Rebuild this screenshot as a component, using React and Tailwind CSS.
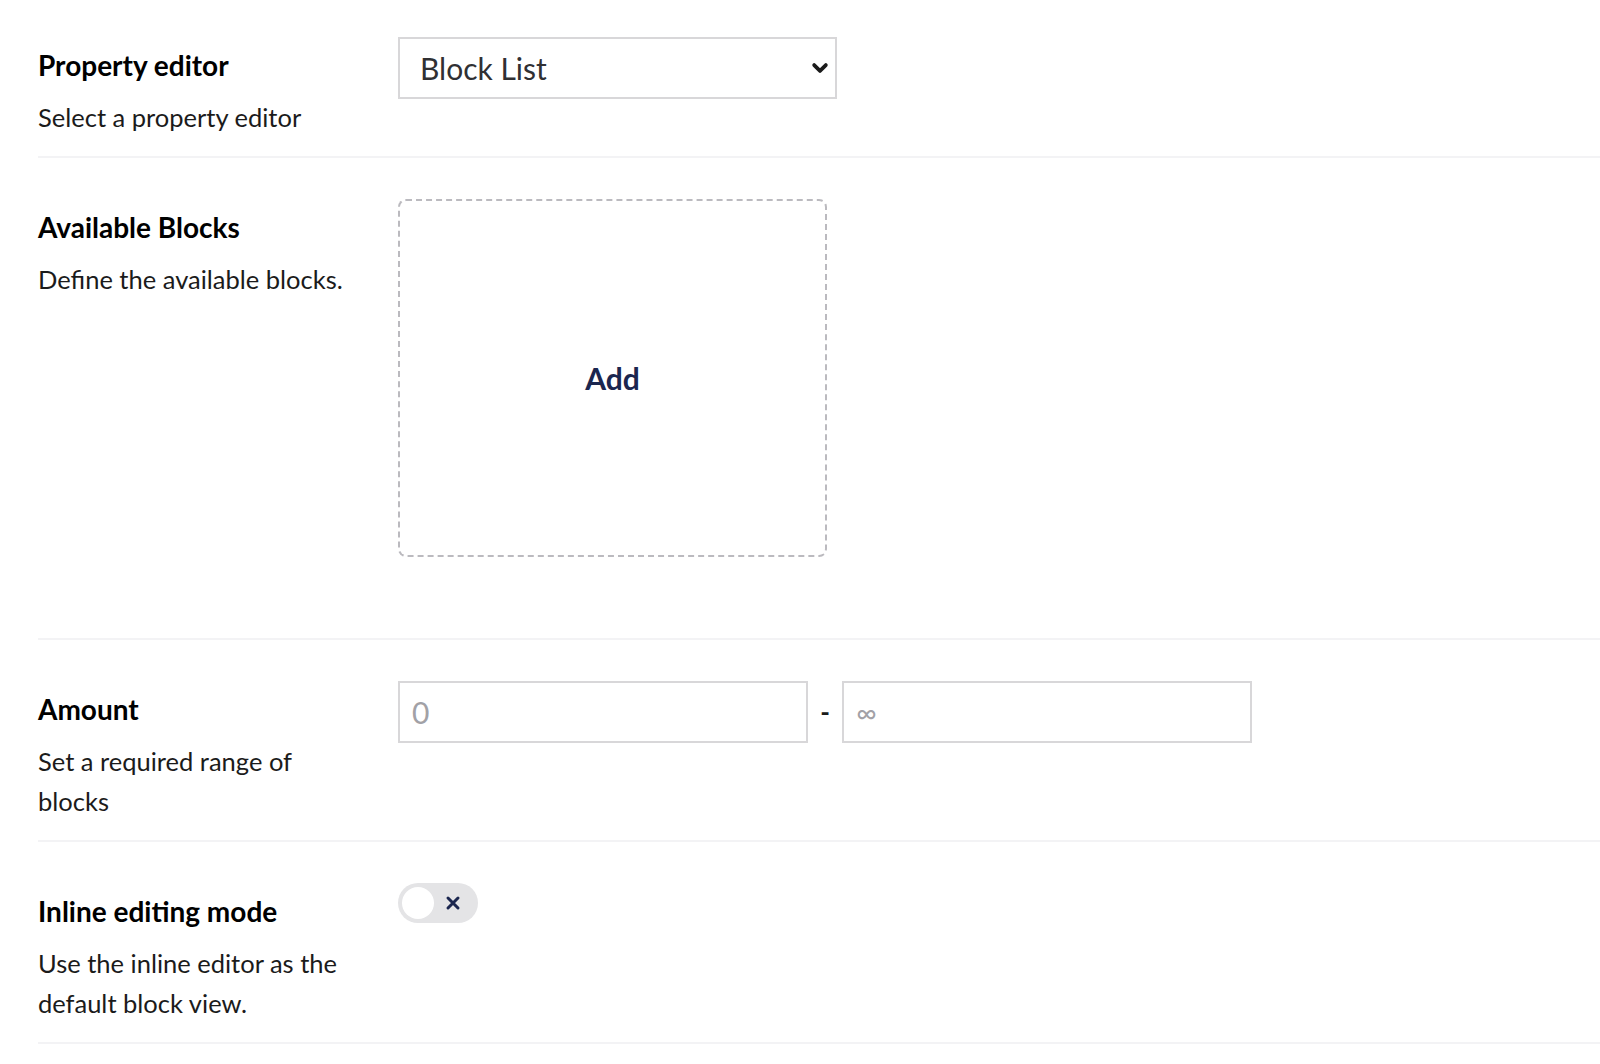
import React from "react";

const font = { fontFamily: "Lato, 'Open Sans', sans-serif" };

const Row = ({ label, description, first, children }) => (
  <div
    className={`flex border-b-2 border-[#f3f3f5] pb-[19px] ${first ? "pt-[37px]" : "pt-[41px]"}`}
  >
    <div className="w-[360px] shrink-0 pr-[30px]">
      <div className="mt-[8px] text-[28px] leading-[40px] font-bold text-[#000]">{label}</div>
      <div className="mt-[12px] text-[25.5px] leading-[40px] text-[#1b1b1b] w-[316px]">
        {description}
      </div>
    </div>
    <div className="flex-1">{children}</div>
  </div>
);

const App = () => {
  return (
    <div className="min-h-[1064px] bg-white pl-[38px]" style={font}>
      <Row label="Property editor" description="Select a property editor" first>
        <div className="flex h-[62px] w-[439px] items-center justify-between border-2 border-[#d8d7d9] bg-white pl-[20px] pr-[5px]">
          <span className="text-[30px] text-[#303033]">Block List</span>
          <svg width="20" height="20" viewBox="0 0 24 24" fill="none" stroke="#1b1b1b" strokeWidth="4.5" strokeLinecap="round" strokeLinejoin="round">
            <path d="M5 8.5l7 7 7-7" />
          </svg>
        </div>
      </Row>

      <Row label="Available Blocks" description="Define the available blocks.">
        <div className="mb-[62px] flex h-[358px] w-[429px] items-center justify-center rounded-[8px] border-2 border-dashed border-[#bbbabf]">
          <span className="text-[30px] font-bold text-[#1b264f]">Add</span>
        </div>
      </Row>

      <Row label="Amount" description="Set a required range of blocks">
        <div className="flex items-center">
          <div className="flex h-[62px] w-[410px] items-center border-2 border-[#d8d7d9] px-[12px]">
            <span className="text-[30px] text-[#a2a1a6]">0</span>
          </div>
          <span className="w-[34px] text-center text-[26px] font-bold text-[#1b1b1b]">-</span>
          <div className="flex h-[62px] w-[410px] items-center border-2 border-[#d8d7d9] px-[12px]">
            <span className="text-[28px] text-[#a2a1a6]">∞</span>
          </div>
        </div>
      </Row>

      <Row label="Inline editing mode" description="Use the inline editor as the default block view.">
        <div className="flex h-[40px] w-[80px] items-center justify-between rounded-full bg-[#e4e4e6] pl-[4px] pr-[17px]">
          <div className="h-[32px] w-[32px] rounded-full bg-white" />
          <svg width="16" height="16" viewBox="0 0 16 16" fill="none" stroke="#1b264f" strokeWidth="3" strokeLinecap="round">
            <path d="M3 3l10 10M13 3L3 13" />
          </svg>
        </div>
      </Row>
    </div>
  );
};

export default App;
